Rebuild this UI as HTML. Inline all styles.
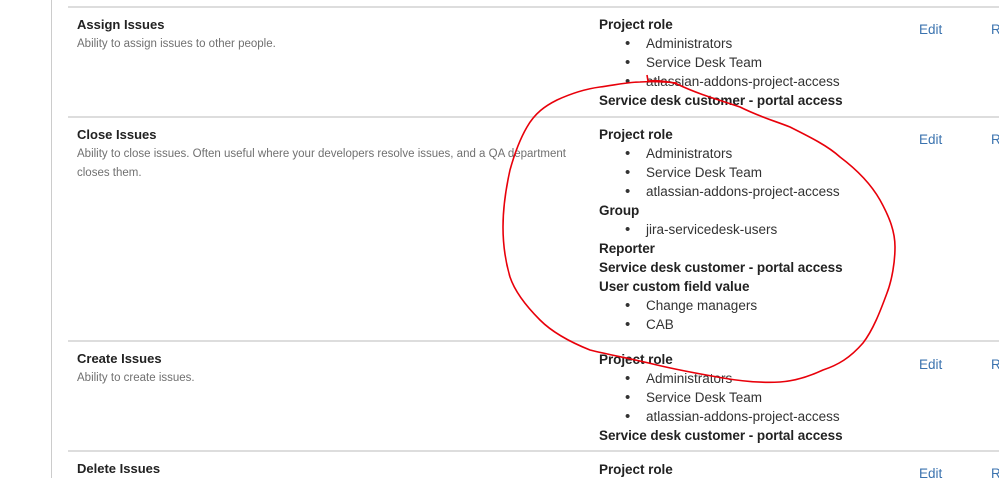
<!DOCTYPE html>
<html><head><style>
body{margin:0;width:999px;height:478px;overflow:hidden;background:#fff;font-family:"Liberation Sans",Arial,sans-serif;position:relative;color:#333}
.vl{position:absolute;left:51px;top:0;width:1px;height:478px;background:#ccc}
.hr{position:absolute;left:68px;right:0;height:2px;background:#ddd}
.t{position:absolute;left:77px;font-size:13px;font-weight:bold;color:#222}
.d{position:absolute;left:77px;font-size:11.5px;color:#707070;line-height:19px;width:510px}
.r{position:absolute;left:599px;font-size:13.5px;line-height:19px;color:#333}
.r b{display:block;color:#222;letter-spacing:-0.05px}
.r div{padding-left:47px;position:relative}
.r div:before{content:"•";position:absolute;left:26px;font-size:15px}
.e{position:absolute;left:919px;font-size:13.5px;color:#3b73af}
.x{position:absolute;left:991px;font-size:13.5px;color:#3b73af}
</style></head><body>
<div class="vl"></div>
<div class="hr" style="top:6px"></div>
<div class="hr" style="top:116px"></div>
<div class="hr" style="top:340px"></div>
<div class="hr" style="top:450px"></div>

<div class="t" style="top:17px">Assign Issues</div>
<div class="d" style="top:35px">Ability to assign issues to other people.</div>
<div class="r" style="top:15px"><b>Project role</b><div>Administrators</div><div>Service Desk Team</div><div>atlassian-addons-project-access</div><b>Service desk customer - portal access</b></div>
<div class="e" style="top:22px">Edit</div><div class="x" style="top:22px">R</div>

<div class="t" style="top:127px">Close Issues</div>
<div class="d" style="top:145px">Ability to close issues. Often useful where your developers resolve issues, and a QA department closes them.</div>
<div class="r" style="top:125px"><b>Project role</b><div>Administrators</div><div>Service Desk Team</div><div>atlassian-addons-project-access</div><b>Group</b><div>jira-servicedesk-users</div><b>Reporter</b><b>Service desk customer - portal access</b><b>User custom field value</b><div>Change managers</div><div>CAB</div></div>
<div class="e" style="top:132px">Edit</div><div class="x" style="top:132px">R</div>

<div class="t" style="top:351px">Create Issues</div>
<div class="d" style="top:369px">Ability to create issues.</div>
<div class="r" style="top:350px"><b>Project role</b><div>Administrators</div><div>Service Desk Team</div><div>atlassian-addons-project-access</div><b>Service desk customer - portal access</b></div>
<div class="e" style="top:357px">Edit</div><div class="x" style="top:357px">R</div>

<div class="t" style="top:461px">Delete Issues</div>
<div class="r" style="top:460px"><b>Project role</b></div>
<div class="e" style="top:466px">Edit</div><div class="x" style="top:466px">R</div>

<svg style="position:absolute;left:0;top:0" width="999" height="478"><path d="M647,75 L648,81 C660,80 670,82 677,84 C700,95 720,100 740,107 C760,117 775,121 790,127 C810,137 828,146 840,157 C860,172 872,186 880,200 C890,218 895,232 895,247 C895,262 892,280 887,293 C880,312 873,330 863,343 C850,358 838,365 823,370 C808,377 795,381 780,382 C760,383 740,381 723,378 C700,374 678,370 657,365 C633,359 610,355 590,350 C570,342 552,332 540,320 C527,307 515,292 510,277 C505,260 503,244 503,227 C503,208 506,188 510,170 C515,152 520,139 527,127 C535,113 545,106 557,100 C570,94 585,89 600,87 C615,85 628,82 640,82 C655,81 667,82 677,83" fill="none" stroke="#e8000a" stroke-width="1.6"/></svg>
</body></html>
